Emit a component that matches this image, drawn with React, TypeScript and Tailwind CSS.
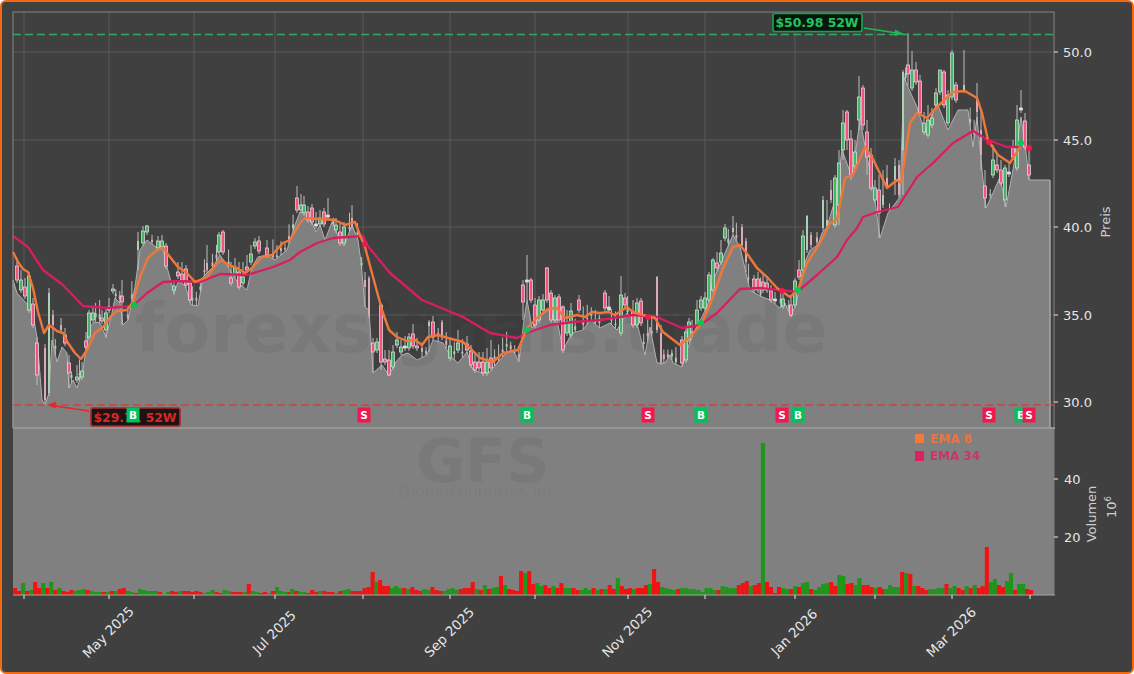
type Candle = [number, string, number, number, number?, number?];

const AREA: [number, number][] = [
  [13, 280], [17, 293], [28, 305], [33, 315], [37, 337], [42, 400], [45, 405], [49, 393], [52, 340], [57, 362], [62, 347], [67, 353],
  [69, 388], [73, 380], [77, 388], [83, 370], [89, 327], [95, 322], [100, 323], [106, 337], [112, 313], [115, 298], [120, 303], [123, 325],
  [128, 320], [135, 287], [140, 250], [147, 240], [157, 248], [163, 248], [167, 267], [174, 293], [178, 282], [185, 285], [191, 305], [198, 306],
  [203, 277], [213, 267], [220, 255], [230, 270], [238, 283], [247, 290], [252, 267], [258, 257], [267, 255], [275, 260], [287, 250], [295, 225],
  [300, 212], [304, 213], [310, 218], [316, 232], [320, 225], [325, 240], [332, 222], [340, 240], [344, 246], [352, 225], [358, 240], [361, 262],
  [365, 307], [369, 310], [373, 373], [382, 365], [389, 375], [395, 363], [402, 355], [408, 353], [417, 360], [427, 355], [433, 340], [443, 343],
  [451, 357], [458, 363], [467, 352], [473, 370], [483, 373], [490, 372], [497, 363], [507, 352], [513, 350], [519, 362], [524, 320], [527, 300],
  [532, 328], [540, 317], [548, 310], [557, 320], [563, 350], [572, 333], [583, 330], [590, 320], [600, 328], [610, 323], [617, 330], [627, 313],
  [637, 323], [645, 355], [650, 327], [657, 363], [665, 363], [670, 355], [673, 363], [682, 367], [688, 347], [695, 330], [707, 307], [713, 280],
  [722, 260], [733, 235], [740, 247], [746, 273], [750, 290], [760, 296], [770, 300], [780, 308], [785, 303], [791, 317], [797, 300], [803, 267],
  [810, 250], [818, 245], [822, 233], [827, 227], [835, 200], [842, 150], [852, 177], [860, 120], [873, 187], [880, 238], [888, 213], [900, 197],
  [904, 77], [908, 87], [917, 107], [925, 133], [937, 103], [948, 130], [958, 110], [968, 110], [973, 147], [977, 117], [982, 170], [986, 208],
  [993, 193], [1000, 177], [1006, 207], [1013, 170], [1021, 117], [1025, 143], [1029, 180], [1050, 180],
];

const EMA8 = "13,252 18,262 23,269 28,272 33,288 38,312 44,333 49,325 57,331 63,333 68,343 75,353 81,359 87,350 95,333 103,327 112,315 117,311 127,310 133,302 140,277 148,258 157,250 163,248 170,257 178,267 187,273 195,282 207,277 217,263 222,260 228,265 237,268 245,273 252,268 262,257 272,255 283,243 290,240 300,223 305,218 320,219 335,220 345,225 355,222 360,235 365,247 373,277 382,310 389,330 397,337 407,341 415,340 422,345 428,337 438,335 448,338 463,342 470,348 480,358 493,362 503,353 518,350 527,328 537,318 548,309 557,308 565,318 577,315 585,317 592,312 600,313 608,312 615,315 627,307 633,312 643,315 655,318 663,332 680,345 690,337 702,323 713,297 723,268 733,247 740,245 748,255 757,268 767,277 777,288 790,297 798,290 807,263 820,243 830,223 837,220 845,178 853,175 865,147 872,157 887,188 897,180 901,183 910,123 917,113 927,118 937,107 953,92 965,91 977,98 982,113 988,140 998,155 1010,163 1020,147";
const EMA34 = "13,236 28,247 43,270 63,285 83,306 107,308 133,306 147,293 163,282 180,281 200,282 220,274 247,275 273,267 290,260 300,252 317,243 333,238 363,236 367,245 390,273 422,300 463,317 490,333 517,338 527,333 550,325 573,322 600,320 633,315 657,317 682,328 700,325 717,313 740,289 760,288 797,292 817,275 837,257 847,240 857,228 863,217 877,212 898,207 917,177 933,163 953,143 973,131 988,140 1007,147 1020,147";

// notable candles read off the chart: x, colour, body top, body bottom, wick top, wick bottom
const CANDLES: Candle[] = [
  [17, "r", 266, 280, 258], [21, "g", 280, 290, 270], [25, "r", 287, 296, 278], [29, "g", 276, 310, 272], [33, "r", 304, 325, 298], [37, "r", 343, 375, 337, 385],
  [45, "p", 348, 400, 344], [49, "q", 293, 393, 288], [53, "p", 315, 325, 310, 345], [61, "p", 325, 330, 318], [65, "r", 335, 343, 328], [69, "r", 363, 373, 355, 388],
  [77, "g", 377, 380, 365], [82, "g", 371, 377, 362], [86, "r", 341, 347, 332], [89, "g", 313, 337, 310], [93, "g", 313, 320, 307], [102, "r", 318, 321, 310], [106, "g", 313, 330, 308, 338],
  [109, "r", 307, 310, 298], [113, "g", 289, 291, 284], [122, "r", 296, 302, 280, 325], [138, "q", 241, 250, 232, 270], [143, "g", 231, 243, 226], [147, "g", 226, 232, 225], [158, "g", 241, 248, 236],
  [162, "g", 241, 247, 235], [166, "r", 246, 266, 243], [174, "g", 286, 290, 280, 295], [178, "r", 272, 276, 262], [182, "r", 274, 280, 262], [186, "r", 269, 285, 265], [190, "r", 283, 300, 280],
  [207, "p", 263, 270, 245], [219, "g", 235, 252, 232], [223, "r", 232, 252, 230], [231, "r", 278, 283, 262], [235, "g", 268, 275, 258], [239, "r", 272, 287, 262], [243, "g", 277, 283, 262],
  [247, "r", 267, 270, 255], [251, "g", 254, 262, 245], [255, "g", 242, 246, 238], [259, "r", 241, 251, 236], [267, "r", 248, 255, 240],
  [297, "r", 198, 210, 186], [301, "g", 205, 210, 194], [304, "g", 205, 213, 196], [308, "r", 212, 220, 206], [312, "r", 208, 222, 204], [316, "w", 224, 226, 212], [320, "g", 218, 224, 210],
  [324, "r", 212, 224, 208], [328, "w", 215, 217, 198], [336, "g", 225, 230, 218], [340, "r", 232, 243, 222], [344, "g", 227, 243, 222], [352, "p", 218, 226, 205],
  [365, "p", 280, 287, 272, 307], [369, "p", 278, 315, 276], [373, "r", 343, 352, 338, 372], [377, "g", 342, 350, 338], [381, "r", 305, 362, 303, 370], [385, "r", 359, 362, 350], [389, "r", 360, 375, 350, 376],
  [393, "g", 352, 367, 345], [397, "g", 340, 345, 332], [401, "g", 347, 352, 340], [405, "w", 346, 348, 336], [409, "g", 337, 348, 333], [413, "r", 334, 346, 324], [417, "r", 346, 348, 338],
  [429, "q", 322, 326, 320, 352], [433, "r", 322, 337, 316], [442, "p", 322, 337, 320], [450, "g", 346, 358, 340], [458, "g", 343, 350, 330], [467, "r", 344, 350, 336], [471, "r", 351, 365, 345],
  [475, "r", 362, 370, 352], [479, "r", 362, 368, 352], [483, "r", 362, 373, 352], [487, "g", 362, 373, 348], [491, "r", 358, 368, 340], [523, "r", 285, 302, 280, 320], [527, "w", 280, 282, 255, 300], [531, "r", 280, 300, 278],
  [535, "r", 305, 325, 298], [539, "g", 300, 320, 296], [543, "g", 300, 310, 294], [547, "r", 268, 300, 267], [551, "r", 293, 320, 290], [555, "g", 298, 320, 295], [559, "r", 297, 320, 294],
  [563, "r", 307, 350, 305], [567, "g", 322, 333, 310], [571, "g", 311, 335, 303], [579, "r", 300, 310, 295], [605, "r", 293, 308, 290], [609, "w", 307, 310, 296], [621, "g", 295, 333, 276],
  [625, "r", 298, 305, 293], [633, "r", 312, 325, 300], [637, "g", 303, 325, 298], [641, "r", 301, 323, 298], [657, "p", 277, 330, 276], [661, "p", 333, 362, 325], [682, "r", 340, 363, 336, 366],
  [686, "g", 332, 360, 328], [689, "g", 322, 340, 318], [697, "g", 310, 325, 300], [701, "g", 300, 308, 296], [705, "g", 298, 308, 292], [709, "g", 275, 300, 272], [713, "g", 260, 290, 258],
  [717, "r", 263, 268, 252], [721, "g", 253, 262, 240], [725, "g", 228, 238, 224], [733, "q", 228, 232, 216, 236], [742, "p", 227, 245, 224], [746, "p", 241, 262, 238, 272], [754, "r", 279, 290, 275], [758, "r", 279, 290, 272], [763, "r", 282, 290, 274],
  [767, "r", 283, 290, 276], [771, "r", 291, 300, 285], [775, "w", 299, 301, 292], [783, "g", 299, 306, 293], [791, "r", 305, 315, 296, 316], [795, "g", 281, 305, 278], [799, "r", 270, 277, 260],
  [803, "g", 236, 270, 230], [807, "q", 216, 250, 215], [811, "p", 235, 245, 232], [823, "q", 200, 228, 196], [827, "q", 220, 226, 200], [831, "p", 190, 200, 180], [835, "g", 178, 225, 175], [839, "g", 163, 205, 150, 225],
  [843, "g", 123, 150, 110, 160], [847, "r", 112, 140, 110, 150], [851, "r", 139, 175, 130, 180], [855, "g", 152, 166, 140], [859, "g", 97, 120, 76, 130], [863, "r", 88, 125, 85, 130], [867, "r", 132, 157, 120, 175],
  [871, "r", 155, 188, 148], [875, "g", 188, 200, 180], [879, "r", 190, 213, 175, 238], [883, "q", 195, 205, 170], [887, "p", 178, 186, 165], [895, "q", 166, 180, 158, 195], [899, "p", 165, 195, 160], [903, "q", 72, 150, 70, 195],
  [908, "r", 65, 74, 33, 86], [912, "g", 70, 88, 51], [916, "r", 70, 82, 62], [920, "r", 81, 113, 75], [924, "g", 123, 132, 112], [928, "g", 120, 135, 105], [932, "g", 118, 125, 108],
  [936, "g", 93, 105, 88], [940, "g", 70, 92, 70], [944, "r", 72, 105, 70], [948, "g", 95, 123, 90], [952, "g", 53, 97, 50], [956, "r", 85, 100, 82], [964, "q", 85, 90, 50], [977, "p", 100, 112, 83, 125],
  [981, "p", 130, 155, 110, 170], [985, "r", 186, 198, 170, 208], [993, "g", 160, 175, 145], [997, "r", 165, 170, 155], [1001, "r", 170, 183, 160], [1005, "g", 168, 200, 165, 207], [1009, "w", 172, 174, 162],
  [1013, "r", 148, 157, 140], [1017, "g", 120, 168, 105], [1021, "w", 108, 110, 90], [1025, "r", 121, 147, 113], [1029, "r", 165, 175, 147, 180],
];

const BODY: Record<string, string> = { r: "#f5527f", g: "#45b568", p: "#d9aab7", q: "#abd0b6", w: "#dcdcdc" };

// positive = green bar, negative = red bar; each list starts at the x beside it
const VOLUME: [number, number[]][] = [
  [13, [-7, -4, 12, -4, 5, -13, -7, 12, -7, 13, -5, 7, -4, -3, -5, 4, 5, 6, -5, 4, 3, 3, -3, 3, -4, 4, -6, -7, 4, 3, -2, 6, 5, 4, 4, 4, -3, 1, 3, -4, -3, 4, -4, -4, -3, -4, -3, 2, 3, 5, -3, -2, 5, 4, -3, -3, -3, 3, -11, 4, 3, -2, -3, 2, -4, -3]],
  [275, [8, 4, 3, -3, 5, -4]],
  [290, [6, -4, 3, 3, -2, -5, -3, 4, -4, -3, -3, 2, -4, 5, 6, -4, -4, -4, -7, -8, -23, 13]],
  [378, [-15, -9, -9, 7, 9, 7, -7, 6, -8, -5, -4, 6, 5, -8, -5, -4, 4, 6, 7, 5, -6, -7, -7, -13, 6, -5, 10, -6, 7, 8, -19, 10, -6, -5, -4, -24, 22, -24, -11, 12, 9, -10, -7, 9, -7, -12, 7, 7, -7, -5, 5, 7, 5, -7, 5, -6, 6, -10, -6, 17, -9, -6, -7, 6, -7, -7, -10, 11, -26, -13, 8, 7, 6, 5, -6, 7, 7, 6, 6, 5, 3, 7, 7, 5, -5, 9, 8, 7, 7, -10, -12, -14, 9, -10, -12, 152, -13, -8, -2, -8, 7, 6, -6, 9, -7]],
  [797, [-8, 12, 13, -6, 5, 8, 11, 12, -13, -9, 20, 19, -11, -12, 10, 17, -10, -10, -8, 7, -8]],
  [880, [-6, 6, 10, 8, 8, -23, 22, -21, 9, -9, -7, -5, 6, 6, 7, 7, -11, 7, 9, -7, -5, 9, -7, 10, -7, -9, -48, 13, 16, -10, -8, 14, 22, -5, 11, 11, -6, -5]],
];

const MONTH_TICKS = [24, 109, 194, 275, 363, 450, 535, 628, 705, 795, 875, 952, 1030];
const X_LABELS: [number, string][] = [[109, "May 2025"], [275, "Jul 2025"], [450, "Sep 2025"], [628, "Nov 2025"], [795, "Jan 2026"], [952, "Mar 2026"]];
const PRICES: [number, string][] = [[52, "50.0"], [140, "45.0"], [227, "40.0"], [315, "35.0"], [402, "30.0"]];
const BADGES: [number, string][] = [[133, "B"], [364, "S"], [527, "B"], [648, "S"], [701, "B"], [782, "S"], [798, "B"], [989, "S"], [1021, "B"], [1029, "S"]];
const DOTS: [number, number, string][] = [[134, 305, "#00c853"], [365, 244, "#f0184f"], [527, 330, "#00c853"], [648, 317, "#f0184f"], [701, 323, "#00c853"], [782, 291, "#f0184f"], [798, 290, "#00c853"], [989, 142, "#f0184f"], [1021, 143, "#00c853"], [1029, 148, "#f0184f"]];

function areaAt(x: number) {
  for (let i = 1; i < AREA.length; i++) {
    if (x <= AREA[i][0]) {
      const [x0, y0] = AREA[i - 1];
      const [x1, y1] = AREA[i];
      return y0 + ((y1 - y0) * (x - x0)) / (x1 - x0);
    }
  }
  return 180;
}

function noise(i: number) {
  const v = Math.sin(i * 12.9898) * 43758.5453;
  return v - Math.floor(v);
}

// slots nobody read off the chart get a thin pale candle sitting on the area edge
function fillCandles(): Candle[] {
  const out: Candle[] = [];
  for (let i = 0; i < 253; i++) {
    const x = 15 + i * 4.03;
    if (CANDLES.some((c) => Math.abs(c[0] - x) < 2.2)) continue;
    if (x > 1030) continue;
    const low = areaAt(x);
    const bottom = low - 1 - noise(i) * 5;
    const top = bottom - 1 - noise(i + 300) * 4;
    const kind = noise(i + 600) > 0.5 ? "p" : "q";
    out.push([x, kind, top, bottom, top - 3 - noise(i + 900) * 12, low]);
  }
  return out;
}

export default function App() {
  const allCandles = [...fillCandles(), ...CANDLES];
  const areaPoints = AREA.map((p) => p.join(",")).join(" ");

  return (
    <div className="box-border h-[674px] w-[1134px] overflow-hidden rounded-md border-2 border-[#f26a0d] bg-[#404040] [font-family:'DejaVu_Sans',sans-serif]">
      <svg width={1130} height={670} viewBox="2 2 1130 670" className="block">
        {/* grid */}
        {MONTH_TICKS.map((x) => <line key={x} x1={x} x2={x} y1={12} y2={428} stroke="#585858" />)}
        {PRICES.map(([y]) => <line key={y} x1={13} x2={1054} y1={y} y2={y} stroke="#585858" />)}

        {/* price area */}
        <polygon points={`13,428 ${areaPoints} 1050,428`} fill="#808080" stroke="#b0b0b0" strokeWidth={1} />

        {/* watermarks */}
        <text x={135} y={352} fontSize={67} fontWeight={700} fill="#000" fillOpacity={0.055}>forexsignals.trade</text>

        {/* candles */}
        {allCandles.map(([x, kind, top, bottom, high, low], i) => {
          const pale = kind === "p" || kind === "q";
          return (
            <g key={i}>
              <line x1={x} x2={x} y1={high ?? top - 5} y2={low ?? bottom + 3} stroke="#bdbdbd" strokeWidth={1} />
              <rect
                x={x - (pale ? 1 : 1.5)}
                y={top}
                width={pale ? 2 : 3}
                height={bottom - top}
                fill={BODY[kind]}
                stroke={pale ? "none" : "#e6e6e6"}
                strokeWidth={0.7}
              />
            </g>
          );
        })}

        {/* 52 week lines */}
        <line x1={13} x2={1054} y1={34.5} y2={34.5} stroke="#33a860" strokeWidth={1.7} strokeDasharray="8 4" />
        <line x1={13} x2={1054} y1={405} y2={405} stroke="#d13f3f" strokeWidth={1.7} strokeDasharray="8 4" />

        <polyline points={EMA34} fill="none" stroke="#d81e62" strokeWidth={2.3} strokeLinejoin="round" />
        <polyline points={EMA8} fill="none" stroke="#f0773a" strokeWidth={2.4} strokeLinejoin="round" />
        {DOTS.map(([x, y, c]) => <circle key={x} cx={x} cy={y} r={3} fill={c} />)}

        {/* volume panel */}
        <rect x={13} y={428} width={1041.5} height={167} fill="#808080" />
        <text x={416} y={482} fontSize={60} fontWeight={700} fill="#000" fillOpacity={0.055}>GFS</text>
        <text x={398} y={497} fontSize={16} fill="#000" fillOpacity={0.055}>GlobalFoundries Inc</text>
        {VOLUME.map(([start, bars]) =>
          bars.map((v, i) => (
            <rect key={`${start}-${i}`} x={start + i * 4.03} y={595 - Math.abs(v)} width={4.1} height={Math.abs(v)} fill={v > 0 ? "#1f951c" : "#f21212"} />
          ))
        )}
        <line x1={13} x2={1055} y1={428} y2={428} stroke="#a8a8a8" strokeWidth={2} />

        {/* spines */}
        <rect x={13} y={12} width={1041} height={416} fill="none" stroke="#858585" />
        <line x1={13} x2={1055} y1={595} y2={595} stroke="#a6a6a6" />
        <line x1={1050} x2={1050} y1={180} y2={428} stroke="#a0a0a0" />

        {/* legend */}
        <rect x={915} y={434} width={9} height={9} fill="#f47a3c" />
        <text x={930} y={443} fontSize={12} fontWeight={700} fill="#ea7440">EMA 8</text>
        <rect x={915} y={451} width={9} height={10} fill="#dc2063" />
        <text x={930} y={460} fontSize={12} fontWeight={700} fill="#c93868">EMA 34</text>

        {/* 52 week callouts */}
        <line x1={864} y1={28} x2={897} y2={33} stroke="#22b455" strokeWidth={1.7} />
        <polygon points="904,34 895,29.5 894.5,36" fill="#22b455" />
        <rect x={773} y={13.5} width={89} height={18} rx={2} fill="#06180e" stroke="#1f9e50" strokeWidth={1.7} />
        <text x={775.5} y={27} fontSize={12.4} fontWeight={700} fill="#22c45e">$50.98 52W</text>

        <line x1={89} y1={411} x2={55} y2={406} stroke="#e02a2a" strokeWidth={1.7} />
        <polygon points="47,405 56,401.5 55.5,408.5" fill="#e02a2a" />
        <rect x={91} y={408} width={89} height={18} rx={2} fill="#1c1414" stroke="#b52525" strokeWidth={1.7} />
        <text x={93.5} y={421.5} fontSize={12.4} fontWeight={700} fill="#dc2626">$29.71 52W</text>

        {/* buy / sell badges */}
        {BADGES.map(([x, label]) => (
          <g key={x}>
            <rect x={x - 6.5} y={407.5} width={13} height={15} fill={label === "B" ? "#00c25a" : "#f0184f"} />
            <text x={x} y={419} fontSize={10.5} fontWeight={700} fill="#fff" textAnchor="middle">{label}</text>
          </g>
        ))}

        {/* axes */}
        {MONTH_TICKS.map((x) => <line key={x} x1={x} x2={x} y1={595} y2={599} stroke="#e8e8e8" />)}
        {X_LABELS.map(([x, label]) => (
          <text key={x} x={x - 1} y={637} fontSize={13.4} fill="#e6e6e6" textAnchor="middle" transform={`rotate(-45 ${x - 1} 632)`}>{label}</text>
        ))}
        {PRICES.map(([y, label]) => (
          <g key={y}>
            <line x1={1054} x2={1058} y1={y} y2={y} stroke="#e8e8e8" />
            <text x={1063} y={y + 4.7} fontSize={13} fill="#e6e6e6">{label}</text>
          </g>
        ))}
        {[[479, "40"], [537, "20"]].map(([y, label]) => (
          <g key={label}>
            <line x1={1054} x2={1058} y1={Number(y)} y2={Number(y)} stroke="#e8e8e8" />
            <text x={1064} y={Number(y) + 4.7} fontSize={13} fill="#e6e6e6">{label}</text>
          </g>
        ))}
        <text x={1110} y={222} fontSize={13} fill="#cfcfcf" textAnchor="middle" transform="rotate(-90 1110 222)">Preis</text>
        <text x={1096} y={514} fontSize={13} fill="#cfcfcf" textAnchor="middle" transform="rotate(-90 1096 514)">Volumen</text>
        <text x={1116} y={507} fontSize={13} fill="#cfcfcf" textAnchor="middle" transform="rotate(-90 1116 507)">10<tspan fontSize={8.5} dy={-5}>6</tspan></text>
      </svg>
    </div>
  );
}
